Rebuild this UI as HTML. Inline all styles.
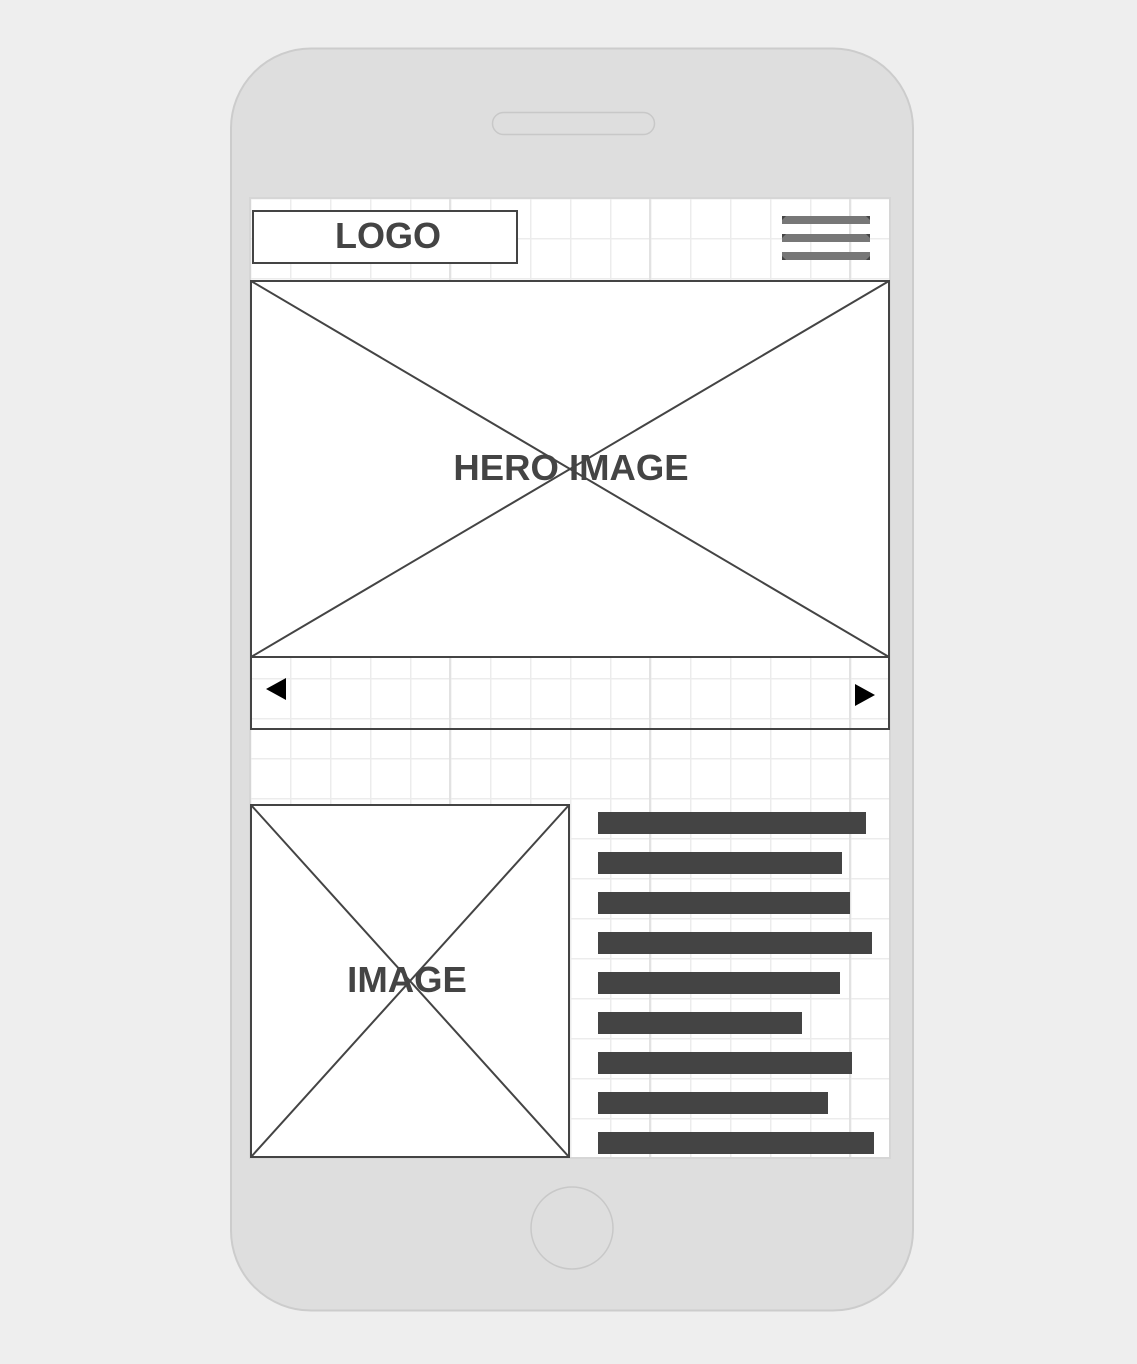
<!DOCTYPE html>
<html><head><style>html,body{margin:0;padding:0;background:#eeeeee;}svg{display:block}</style></head>
<body>
<svg width="1137" height="1364" viewBox="0 0 1137 1364" xmlns="http://www.w3.org/2000/svg" font-family="Liberation Sans, sans-serif">
<defs>
<pattern id="g" x="250" y="198" width="40" height="40" patternUnits="userSpaceOnUse">
<path d="M0 0.5H40M0.5 0V40" stroke="#ececec" stroke-width="2" fill="none"/>
</pattern>
</defs>
<rect width="1137" height="1364" fill="#eeeeee"/>
<rect x="231" y="48.5" width="682" height="1262" rx="80" fill="#dedede" stroke="#cccccc" stroke-width="2"/>
<rect x="492.5" y="112.5" width="162" height="22" rx="11" fill="#dedede" stroke="#c8c8c8" stroke-width="1.5"/>
<circle cx="572" cy="1228" r="41" fill="#dedede" stroke="#c8c8c8" stroke-width="1.5"/>
<rect x="250" y="198" width="640" height="960" fill="#fff" stroke="#d6d6d6" stroke-width="2"/>
<rect x="251" y="199" width="638" height="958" fill="url(#g)"/>
<path d="M450 199V1157M650 199V1157M850 199V1157" stroke="#e2e2e2" stroke-width="2"/>
<rect x="253" y="211" width="264" height="52" fill="#fff" stroke="#444" stroke-width="2"/>
<text x="388" y="248" text-anchor="middle" font-size="36" font-weight="bold" fill="#444">LOGO</text>
<g fill="#777"><rect x="782" y="216" width="88" height="8"/><rect x="782" y="234" width="88" height="8"/><rect x="782" y="252" width="88" height="8"/></g>
<g fill="#444"><path d="M782 216h4l-4 4zM870 216h-4l4 4zM782 234h4l-4 4zM870 234h-4l4 4zM782 260h4l-4-4zM870 260h-4l4-4z"/></g>
<rect x="251" y="281" width="638" height="376" fill="#fff" stroke="#444" stroke-width="2"/>
<path d="M251 281L889 657M889 281L251 657" stroke="#444" stroke-width="2"/>
<text x="571" y="480" text-anchor="middle" font-size="36.5" font-weight="bold" fill="#444">HERO IMAGE</text>
<rect x="251" y="657" width="638" height="72" fill="none" stroke="#444" stroke-width="2"/>
<path d="M266 689L286 678V700Z" fill="#000"/>
<path d="M875 695L855 684V706Z" fill="#000"/>
<rect x="251" y="805" width="318" height="352" fill="#fff" stroke="#444" stroke-width="2"/>
<path d="M251 805L569 1157M569 805L251 1157" stroke="#444" stroke-width="2"/>
<text x="407" y="992" text-anchor="middle" font-size="36.5" font-weight="bold" fill="#444">IMAGE</text>
<g fill="#444">
<rect x="598" y="812" width="268" height="22"/>
<rect x="598" y="852" width="244" height="22"/>
<rect x="598" y="892" width="252" height="22"/>
<rect x="598" y="932" width="274" height="22"/>
<rect x="598" y="972" width="242" height="22"/>
<rect x="598" y="1012" width="204" height="22"/>
<rect x="598" y="1052" width="254" height="22"/>
<rect x="598" y="1092" width="230" height="22"/>
<rect x="598" y="1132" width="276" height="22"/>
</g>
</svg>
</body></html>
